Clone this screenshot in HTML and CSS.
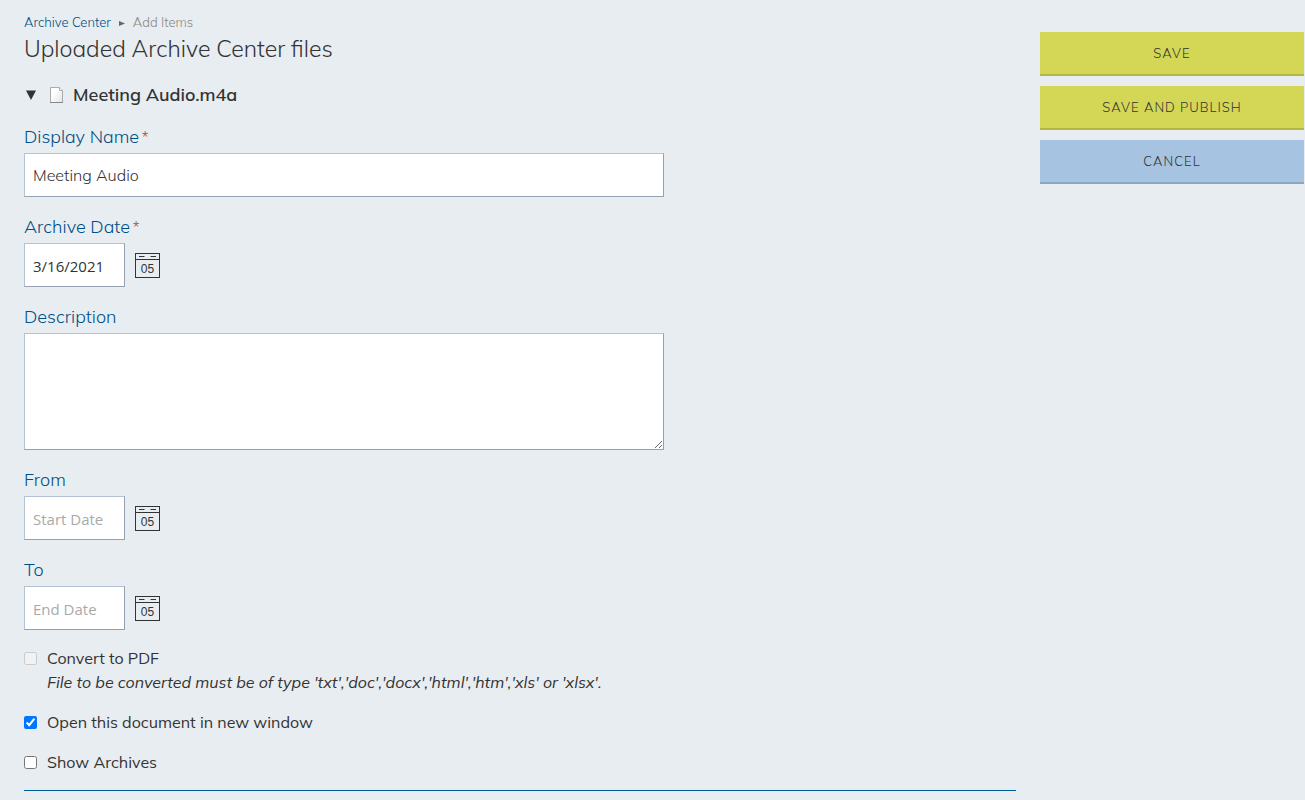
FILE: index.html
```html
<!DOCTYPE html>
<html lang="en">
<head>
    <meta charset="UTF-8">
    <meta name="viewport" content="width=device-width, initial-scale=1.0">
    <title>Uploaded Archive Center files</title>
    <link rel="stylesheet" href="styles.css">
</head>
<body>
    <!-- Calendar icon, reused next to each date field -->
    <svg class="sprite" aria-hidden="true">
        <symbol id="calendar" viewBox="0 0 25 25">
            <rect x="0.5" y="0.5" width="24" height="24" fill="none" stroke="#333"/>
            <path d="M0 6.5H25M4 3.5H9.500M15.500 3.500H21" fill="none" stroke="#333"/>
            <text x="12.5" y="20" text-anchor="middle" class="calendar-day">05</text>
        </symbol>
    </svg>

    <form class="page">
        <main class="content">
            <nav class="breadcrumb" aria-label="Breadcrumb">
                <a href="#">Archive Center</a>
                <svg width="6" height="8" viewBox="0 0 6 8" aria-hidden="true"><path d="M0 3L6 5.500L0 8Z" fill="#666"/></svg>
                <span>Add Items</span>
            </nav>
            <h1>Uploaded Archive Center files</h1>

            <h2>
                <svg width="10" height="10" viewBox="0 0 10 10" aria-hidden="true"><path d="M0 0.500H10L5 10Z" fill="#333"/></svg>
                <svg class="file-icon" width="13" height="16" viewBox="0 0 13 16" aria-hidden="true">
                    <defs>
                        <linearGradient id="paper" x1="0" y1="0" x2="1" y2="1">
                            <stop offset="0.3" stop-color="#fff"/>
                            <stop offset="1" stop-color="#e4e4e4"/>
                        </linearGradient>
                    </defs>
                    <path d="M0.5 0.5H9.500L12.500 3.500V15.500H0.500Z" fill="url(#paper)" stroke="#aaa"/>
                    <path d="M9.500 0.500V3.500H12.500" fill="#fff" stroke="#aaa"/>
                    <path d="M0 15.500H13" stroke="#888"/>
                </svg>
                Meeting Audio.m4a
            </h2>

            <div class="fields">
                <div class="field">
                    <label for="displayName">Display Name <span class="required">*</span></label>
                    <input type="text" id="displayName" value="Meeting Audio">
                </div>

                <div class="field">
                    <label for="archiveDate">Archive Date <span class="required">*</span></label>
                    <div class="date">
                        <input type="text" id="archiveDate" value="3/16/2021">
                        <button type="button" class="calendar" aria-label="Pick archive date"><svg width="25" height="25"><use href="#calendar"/></svg></button>
                    </div>
                </div>

                <div class="field">
                    <label for="description">Description</label>
                    <textarea id="description"></textarea>
                </div>

                <div class="field">
                    <label for="startDate">From</label>
                    <div class="date">
                        <input type="text" id="startDate" placeholder="Start Date">
                        <button type="button" class="calendar" aria-label="Pick start date"><svg width="25" height="25"><use href="#calendar"/></svg></button>
                    </div>
                </div>

                <div class="field">
                    <label for="endDate">To</label>
                    <div class="date">
                        <input type="text" id="endDate" placeholder="End Date">
                        <button type="button" class="calendar" aria-label="Pick end date"><svg width="25" height="25"><use href="#calendar"/></svg></button>
                    </div>
                </div>
            </div>

            <div class="check">
                <input type="checkbox" id="convertPdf" aria-describedby="convertNote" disabled>
                <label for="convertPdf">Convert to PDF</label>
                <em id="convertNote">File to be converted must be of type 'txt','doc','docx','html','htm','xls' or 'xlsx'.</em>
            </div>
            <div class="check">
                <input type="checkbox" id="newWindow" checked>
                <label for="newWindow">Open this document in new window</label>
            </div>
            <div class="check">
                <input type="checkbox" id="showArchives">
                <label for="showArchives">Show Archives</label>
            </div>
            <hr>
        </main>

        <aside class="actions">
            <button type="submit">Save</button>
            <button type="submit">Save and Publish</button>
            <button type="button" class="cancel">Cancel</button>
        </aside>
    </form>
</body>
</html>
```

FILE: styles.css
```css
* {
    box-sizing: border-box;
}
body {
    margin: 0;
    background-color: #e8edf1;
    color: #333;
    font-family: Muli, Mulish, "Open Sans", sans-serif;
    font-size: 16px;
    font-weight: 300;
    line-height: 24px;
}
.sprite {
    display: none;
}
.page {
    display: grid;
    grid-template-columns: 1fr 264px;
    gap: 24px;
    padding: 12px 1px 9px 24px;
}
.breadcrumb {
    display: flex;
    align-items: center;
    gap: 8px;
    font-size: 13px;
    line-height: 20px;
    color: #888;
}
.breadcrumb a {
    color: #004f84;
    text-decoration: none;
}
h1 {
    margin: 0 0 17px;
    font-size: 23px;
    font-weight: 300;
    line-height: 34px;
}
h2 {
    display: flex;
    align-items: center;
    margin: 0 0 18px;
    padding-left: 2px;
    font-size: 18px;
    font-weight: 600;
    line-height: 24px;
}
.file-icon {
    margin: 0 10px 0 14px;
}
.fields {
    display: flex;
    flex-direction: column;
    gap: 18px;
    margin-bottom: 16px;
}
.field label {
    display: block;
    margin-bottom: 4px;
    color: #004f84;
    font-size: 18px;
}
.required {
    margin-left: -2px;
    color: #b0413e;
    font-size: 15px;
    line-height: 1;
}
.field input,
.field textarea {
    display: block;
    width: 100%;
    max-width: 640px;
    height: 44px;
    padding: 0 8px;
    border: 1px solid;
    border-color: #b4c3d3 #93a1b0 #93a1b0 #b4c3d3;
    background-color: #fff;
    color: #333;
    font: inherit;
}
.field textarea {
    height: 117px;
    resize: both;
}
.field input::placeholder {
    color: #a9a9a9;
}
.field .date {
    display: flex;
    align-items: center;
    gap: 10px;
}
.field .date input {
    width: 101px;
    padding-top: 2px;
    font-family: "Open Sans", sans-serif;
    font-size: 15px;
    font-weight: 400;
}
.calendar {
    padding: 0;
    border: 0;
    background: none;
    cursor: pointer;
}
.calendar svg {
    display: block;
}
.calendar-day {
    fill: #333;
    font: 12px "Liberation Sans", sans-serif;
}
.check {
    display: grid;
    grid-template-columns: 13px 1fr;
    column-gap: 10px;
    align-items: center;
    margin-bottom: 16px;
    font-weight: 400;
}
.check input {
    width: 13px;
    height: 13px;
    margin: 0;
}
.check em {
    grid-column: 2;
}
hr {
    height: 1px;
    margin: 0;
    border: 0;
    background-color: #005a96;
}
.actions {
    display: flex;
    flex-direction: column;
    gap: 10px;
    padding-top: 20px;
}
.actions button {
    height: 44px;
    padding: 0;
    border: 0;
    border-bottom: 2px solid #b3b74a;
    background-color: #d4d756;
    color: #333;
    font: inherit;
    font-size: 13px;
    letter-spacing: 1px;
    text-transform: uppercase;
    cursor: pointer;
}
.actions .cancel {
    border-color: #8ca6c2;
    background-color: #a6c4e2;
}
```
